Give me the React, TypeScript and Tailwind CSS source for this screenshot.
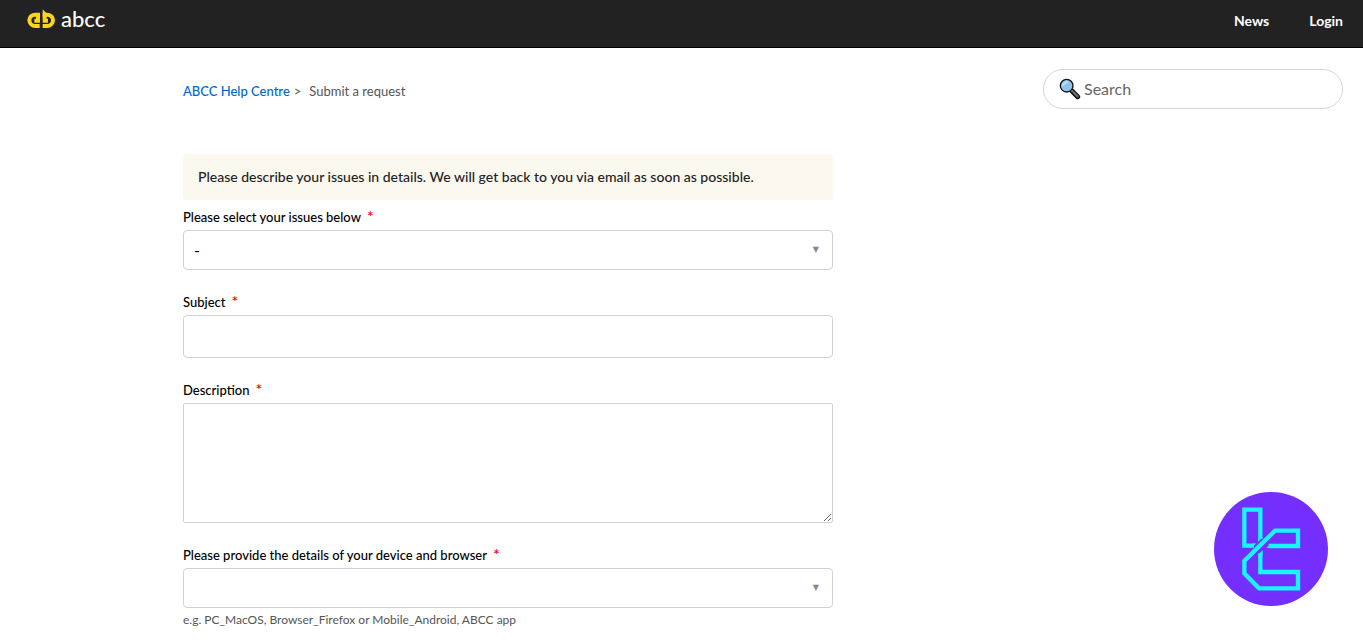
import type { ReactNode } from "react";

function BrandLogo() {
  return (
    <a href="#" className="flex items-center gap-1.5 text-white" aria-label="abcc home">
      <svg width="28" height="20" viewBox="0 0 84 60" fill="none">
        <g stroke="#fbd41d" strokeWidth="12">
          <path d="M38 51H25a18 17 0 0 1 0-34H33V35H22" />
          <path d="M47 51H60a18 17 0 0 0 0-34H53V35H63" />
        </g>
        <path d="M47 1L60 14V24H47Z" fill="#fbd41d" />
      </svg>
      <span className="text-[22px] leading-5 font-medium">abcc</span>
    </a>
  );
}

function SearchIcon() {
  return (
    <svg width="22" height="22" viewBox="0 0 66 66" className="shrink-0" aria-hidden="true">
      <path d="M39 39L56 56" stroke="#111" strokeWidth="15" strokeLinecap="round" />
      <path d="M44 43L56 55" stroke="#6a6a6a" strokeWidth="7" strokeLinecap="round" />
      <path d="M34 34L41 41" stroke="#999" strokeWidth="5" />
      <circle cx="23" cy="23" r="19" fill="#8fc3ee" stroke="#111" strokeWidth="4" />
      <path d="M10 26A15 15 0 0 1 30 10Z" fill="#bcdff8" />
    </svg>
  );
}

function FloatingBadge() {
  return (
    <a href="#" className="fixed right-[35px] bottom-[35px]" aria-label="Open support">
      <svg width="114" height="114" viewBox="42 36 342 342" fill="none">
        <circle cx="213" cy="207" r="171" fill="#742fff" />
        <g stroke="#19f5ff" strokeWidth="13">
          <path d="M162 197H133V89H181V176" />
          <path d="M206 198H294V152H225L133 243V280L177 325H294V276H181V220" />
        </g>
        {/* slanted ends beside the diagonal */}
        <path d="M160 190H169L156 203H150Z" fill="#19f5ff" />
        <path d="M174 175H188V172L174 186Z" fill="#19f5ff" />
        <path d="M212 191H216V204H199Z" fill="#19f5ff" />
        <path d="M174 225V224L188 210V225Z" fill="#19f5ff" />
      </svg>
    </a>
  );
}

function Field({ id, label, children }: { id: string; label: string; children: ReactNode }) {
  return (
    <div className="mb-[22px]">
      <label htmlFor={id} className="mb-[3px] block text-[13px] leading-5 font-medium text-black">
        {label}
        <span className="ml-1.5 text-base leading-4 text-[#e00]">*</span>
      </label>
      {children}
    </div>
  );
}

function SelectBox({ id, option }: { id: string; option: string }) {
  return (
    <div className="relative">
      <select
        id={id}
        className="block h-10 w-full appearance-none rounded-sm border border-[#d2d2d2] bg-white px-2.5 text-base text-black"
      >
        <option>{option}</option>
      </select>
      <span className="pointer-events-none absolute inset-y-0 right-3.5 flex items-center font-['DejaVu_Sans',sans-serif] text-[8px] text-[#888]">
        ▼
      </span>
    </div>
  );
}

export default function App() {
  return (
    <div className="bg-white font-['Lato',sans-serif] text-[#222]">
      <header className="flex h-12 items-start justify-between border-b border-black bg-[#222] pr-5 pl-[27px]">
        <div className="pt-[9px]">
          <BrandLogo />
        </div>
        <nav className="flex gap-10 pt-[11px] text-sm leading-5 font-bold text-white">
          <a href="#">News</a>
          <a href="#">Login</a>
        </nav>
      </header>

      <main className="pr-5 pl-[183px]">
        <div className="flex items-center justify-between pt-[21px]">
          <ol className="flex pt-1 text-[13px] leading-5">
            <li>
              <a href="#" className="font-medium text-[#0068c4]">
                ABCC Help Centre
              </a>
            </li>
            <li className="text-[#555] before:mx-1 before:content-['>']">
              <span className="ml-1">Submit a request</span>
            </li>
          </ol>
          <div className="flex h-10 w-[300px] items-center gap-[3px] rounded-full border border-[#d2d5d8] px-[15px]">
            <SearchIcon />
            <input
              type="search"
              aria-label="Search"
              placeholder="Search"
              className="min-w-0 flex-1 text-base outline-none placeholder:text-[#666]"
            />
          </div>
        </div>

        <form className="mt-[45px] max-w-[650px]">
          <p className="mb-[7px] rounded-sm bg-[#fbf8f0] px-[15px] py-[13px] text-sm leading-5 font-medium">
            Please describe your issues in details. We will get back to you via email as soon as possible.
          </p>

          <Field id="issue" label="Please select your issues below">
            <SelectBox id="issue" option="-" />
          </Field>

          <Field id="subject" label="Subject">
            <input id="subject" type="text" className="block h-[43px] w-full rounded-sm border border-[#d2d2d2] px-2.5 text-sm" />
          </Field>

          <Field id="description" label="Description">
            <textarea
              id="description"
              className="block h-[120px] w-full resize-y rounded-xs border border-[#d2d2d2] p-2.5 text-sm"
            />
          </Field>

          <Field id="device" label="Please provide the details of your device and browser">
            <SelectBox id="device" option="" />
            <p className="mt-0.5 text-xs leading-5 text-[#555]">
              e.g. PC_MacOS, Browser_Firefox or Mobile_Android, ABCC app
            </p>
          </Field>
        </form>
      </main>

      <FloatingBadge />
    </div>
  );
}
